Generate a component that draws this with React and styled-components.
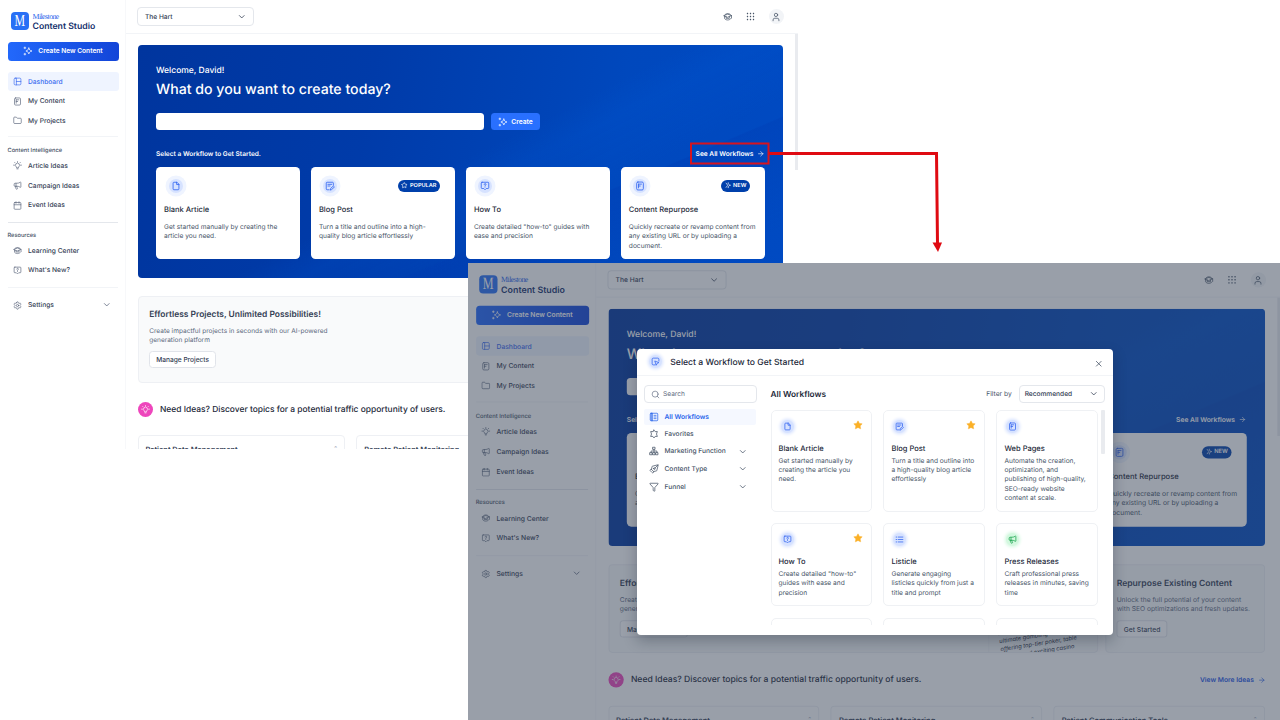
import styled, { createGlobalStyle } from "styled-components";
import {
  ArrowRight,
  Calendar,
  ChevronDown,
  Filter,
  Folder,
  Megaphone,
  Network,
  PenTool,
  Search,
  Settings,
  Star,
  User,
  X,
} from "lucide-react";

const GlobalStyle = createGlobalStyle`
  * {
    box-sizing: border-box;
  }

  body {
    margin: 0;
    background: #ffffff;
    font-family: Inter, "Liberation Sans", sans-serif;
    color: #344054;
    text-rendering: geometricPrecision;
    -webkit-font-smoothing: antialiased;
  }
`;

// Slide and the two windows on it
const Slide = styled.div`
  position: relative;
  width: 1280px;
  height: 720px;
  overflow: hidden;
  background: #ffffff;
`;

const FrontWindow = styled.div`
  position: absolute;
  left: 468px;
  top: 263px;
  width: 812px;
  height: 457px;
  overflow: hidden;
  background: #ffffff;
`;

const Scaled = styled.div`
  transform: scale(1.018);
  transform-origin: 0 0;
`;

const Backdrop = styled.div`
  position: absolute;
  inset: 0;
  background: rgba(52, 64, 84, 0.5);
`;

const ArrowOverlay = styled.svg`
  position: absolute;
  left: 0;
  top: 0;
  pointer-events: none;
`;

// Studio page
const Page = styled.div`
  display: flex;
  width: 798px;
  height: 449px;
  overflow: hidden;
  background: #ffffff;
`;

const Sidebar = styled.aside`
  width: 126px;
  flex-shrink: 0;
  padding: 11.5px 7.5px 0;
  border-right: 1px solid #f7f8fa;
`;

const Logo = styled.div`
  display: flex;
  align-items: center;
  height: 18.5px;
  padding-left: 3.5px;
  gap: 4px;
`;

const LogoMark = styled.div`
  width: 17.5px;
  height: 18px;
  border-radius: 4px;
  background: #2970f5;
  color: #ffffff;
  font: 17px/18px "Liberation Serif", serif;
  text-align: center;

  span {
    display: block;
    transform: scaleX(0.7);
    margin: 0 -3px;
  }
`;

const LogoText = styled.div`
  display: flex;
  flex-direction: column;
  padding-top: 3px;
`;

const LogoName = styled.span`
  height: 8.5px;
  font: 7.8px/8.5px "Liberation Serif", serif;
  letter-spacing: -0.55px;
  color: #2563eb;
`;

const LogoProduct = styled.span`
  font-size: 8.7px;
  line-height: 10px;
  font-weight: 600;
  color: #14306b;
  white-space: nowrap;
`;

const NewButton = styled.button`
  display: flex;
  align-items: center;
  justify-content: center;
  gap: 5px;
  width: 111px;
  height: 18.5px;
  margin: 12px 0 11.5px;
  padding: 0;
  border: none;
  border-radius: 3.5px;
  background: linear-gradient(90deg, #2268fb, #1345d8);
  color: #ffffff;
  font: 600 6.6px Inter, sans-serif;
`;

const NavItem = styled.div`
  display: flex;
  align-items: center;
  width: 111px;
  height: 19px;
  margin-bottom: 0.7px;
  padding: 0 7.5px 0 5.5px;
  gap: 6px;
  border-radius: 3px;
  font-size: 6.65px;
  font-weight: 500;
  background: ${(props) => (props.$active ? "#eff4ff" : "transparent")};
  color: ${(props) => (props.$active ? "#3b6cf0" : "#344054")};

  svg {
    color: ${(props) => (props.$active ? "#3b6cf0" : "#5b667c")};
  }

  svg:last-child:not(:first-child) {
    margin-left: auto;
  }
`;

const NavDivider = styled.div`
  height: 1px;
  margin: ${(props) => props.$margin};
  background: ${(props) => (props.$strong ? "#e4e7ec" : "#f2f4f7")};
`;

const NavLabel = styled.div`
  height: 9px;
  font-size: 5.7px;
  line-height: 9px;
  font-weight: 500;
  color: #475467;
`;

const NavGroup = styled.div`
  margin-top: 1.6px;
`;

const Content = styled.div`
  flex: 1;
  display: flex;
  flex-direction: column;
`;

const TopBar = styled.header`
  display: flex;
  align-items: center;
  height: 34px;
  flex-shrink: 0;
  padding: 0 14.5px 0 11px;
  border-bottom: 1px solid #f2f4f7;
  color: #475467;
`;

const SelectBox = styled.div`
  display: flex;
  align-items: center;
  justify-content: space-between;
  width: ${(props) => props.$width}px;
  height: ${(props) => props.$height}px;
  padding: 0 ${(props) => props.$pad}px;
  border: 1px solid #e4e7ec;
  border-radius: 4px;
  background: #ffffff;
  font-size: 6.6px;
  font-weight: 500;
  color: #344054;
`;

const TopActions = styled.div`
  display: flex;
  align-items: center;
  margin-left: auto;
  gap: 13.5px;
`;

const Avatar = styled.div`
  display: grid;
  place-items: center;
  width: 15px;
  height: 15px;
  border-radius: 50%;
  background: #f2f4f7;
`;

const Body = styled.div`
  display: flex;
  justify-content: space-between;
  flex: 1;
`;

const Main = styled.main`
  width: 645.5px;
  margin: 11px 0 0 11.5px;
`;

const ScrollThumb = styled.div`
  width: ${(props) => props.$width}px;
  height: ${(props) => props.$height}px;
  flex-shrink: 0;
  background: #e9ebef;
  border-radius: ${(props) => props.$radius || 0}px;
`;

// Hero
const Hero = styled.section`
  height: 232.5px;
  padding: 20px 18.5px 0;
  border-radius: 4px;
  color: #ffffff;
  background:
    linear-gradient(157deg, transparent 68%, rgba(0, 58, 178, 0.3) 68.3%, transparent 90%),
    linear-gradient(153deg, transparent 50%, rgba(0, 92, 220, 0.16) 56%, rgba(0, 84, 210, 0.1) 64%, transparent 68%),
    linear-gradient(100deg, #00359e 0%, #003ba9 35%, #0048bd 72%, #004ac2 100%);
`;

const Welcome = styled.div`
  height: 13px;
  font-size: 8.5px;
  line-height: 13px;
  font-weight: 500;
`;

const HeroTitle = styled.h1`
  height: 20px;
  margin: 2px 0 13px;
  font-size: 14.15px;
  line-height: 20px;
  font-weight: 500;
`;

const PromptRow = styled.div`
  display: flex;
  gap: 7.5px;
  height: 17px;
`;

const PromptInput = styled.div`
  width: 327.5px;
  border-radius: 3.5px;
  background: #ffffff;
`;

const CreateButton = styled.button`
  display: flex;
  align-items: center;
  justify-content: center;
  gap: 3.5px;
  width: 48.5px;
  padding: 0;
  border: none;
  border-radius: 3.5px;
  background: #2970ff;
  color: #ffffff;
  font: 600 6.7px Inter, sans-serif;
`;

const PickRow = styled.div`
  display: flex;
  align-items: center;
  justify-content: space-between;
  height: 12px;
  margin: 17.5px 0 7px;
  font-size: 6.55px;
  font-weight: 600;
`;

const TextLink = styled.span`
  display: flex;
  align-items: center;
  gap: 3.5px;
  font-size: 6.6px;
  font-weight: 600;
  color: ${(props) => props.$color || "inherit"};
`;

const WorkflowGrid = styled.div`
  display: grid;
  grid-template-columns: repeat(4, 1fr);
  gap: 11.3px;
`;

const WorkflowCard = styled.article`
  height: 92.5px;
  padding: 8.5px 7.5px 0 8px;
  border-radius: 4.5px;
  background: #ffffff;
`;

const CardTop = styled.div`
  display: flex;
  align-items: center;
  justify-content: space-between;
  height: 21px;
  padding-right: 7px;
`;

const IconHalo = styled.div`
  display: grid;
  place-items: center;
  width: 14px;
  height: 14px;
  margin-left: 4.5px;
  border-radius: 50%;
  background: #d6e2ff;
  box-shadow: 0 0 0 3.5px #eff4ff;
  color: #3366f0;
`;

const Badge = styled.span`
  display: flex;
  align-items: center;
  gap: 2px;
  height: 12px;
  padding: 0 3.6px;
  border-radius: 6px;
  background: #0040ab;
  color: #ffffff;
  font-size: 5.6px;
  font-weight: 600;
`;

const CardTitle = styled.div`
  height: 12px;
  margin: 7.5px 0 7.5px;
  font-size: 7.5px;
  line-height: 12px;
  font-weight: 500;
  color: #1d2939;
`;

const CardText = styled.div`
  font-size: 6.62px;
  line-height: 9.45px;
  color: #475467;
  white-space: pre-line;
`;

// Promo cards
const PromoRow = styled.div`
  display: flex;
  justify-content: space-between;
  margin-top: 18.5px;
`;

const PromoCard = styled.section`
  display: flex;
  justify-content: space-between;
  width: ${(props) => props.$width}px;
  height: 87px;
  overflow: hidden;
  border: 1px solid #eef0f4;
  border-radius: 4px;
  background: #f9fafb;
`;

const PromoCopy = styled.div`
  padding: 11.5px 0 0 10.7px;
`;

const PromoTitle = styled.div`
  height: 13px;
  font-size: 8.45px;
  line-height: 13px;
  font-weight: 600;
  color: #344054;
  white-space: nowrap;
`;

const PromoText = styled.div`
  margin: 5.5px 0 5px;
  font-size: 6.55px;
  line-height: 9.4px;
  color: #5d6a80;
  white-space: pre;
`;

const OutlineButton = styled.button`
  display: block;
  height: 17.5px;
  padding: 0 6px;
  border: 1px solid #e1e4ea;
  border-radius: 3.5px;
  background: #ffffff;
  font: 500 6.6px Inter, sans-serif;
  color: #344054;
`;

const Paper = styled.div`
  width: 107px;
  height: 60px;
  flex-shrink: 0;
  margin-top: 45px;
  padding: 10.5px 0 0 9.5px;
  border-left: 1px solid #eceef2;
  border-radius: 3px;

  p {
    margin: 0;
    font: italic 5.7px/8px Inter, sans-serif;
    color: #1d2939;
    transform: rotate(-9deg);
    white-space: pre;
  }
`;

// Ideas
const IdeasHead = styled.div`
  display: flex;
  align-items: center;
  height: 16px;
  margin-top: 18.5px;
  gap: 7.5px;
`;

const IdeasBadge = styled.div`
  display: grid;
  place-items: center;
  width: 15px;
  height: 15px;
  border-radius: 50%;
  background: #ee46bc;
  color: #ffffff;
`;

const IdeasTitle = styled.div`
  flex: 1;
  padding-top: 0.5px;
  font-size: 8.43px;
  font-weight: 500;
  color: #1d2939;
`;

const IdeasGrid = styled.div`
  display: grid;
  grid-template-columns: repeat(3, 1fr);
  gap: 11px;
  margin-top: 17.5px;
`;

const IdeaCard = styled.div`
  display: flex;
  justify-content: space-between;
  height: 40px;
  padding: 7.5px 7px 0 7px;
  border: 1px solid #eef0f4;
  border-radius: 4px;
  font-size: 7.4px;
  line-height: 12px;
  font-weight: 600;
  color: #344054;

  span {
    color: #98a2b3;
  }
`;

// Workflow picker dialog
const Dialog = styled.div`
  position: absolute;
  left: 168.5px;
  top: 85.5px;
  display: flex;
  flex-direction: column;
  width: 476px;
  height: 286px;
  border-radius: 4px;
  overflow: hidden;
  background: #ffffff;
  box-shadow: 0 6px 14px rgba(16, 24, 40, 0.28);
`;

const DialogHead = styled.div`
  display: flex;
  align-items: center;
  height: 27.5px;
  flex-shrink: 0;
  padding: 0 9px 0 12.5px;
  border-bottom: 1px solid #f2f4f7;
  color: #475467;

  > svg {
    margin-left: auto;
    margin-top: 4px;
  }
`;

const DialogTitle = styled.div`
  margin-left: 8.3px;
  padding-top: 2px;
  font-size: 8.6px;
  font-weight: 500;
  color: #1d2939;
`;

const Glow = styled.div`
  display: grid;
  place-items: center;
  width: 13px;
  height: 13px;
  border-radius: 50%;
  background: ${(props) => (props.$green ? "#d3f8df" : "#d6e2ff")};
  box-shadow: 0 0 3px 1.5px ${(props) => (props.$green ? "#dcfae6" : "#dfe8ff")};
  color: ${(props) => (props.$green ? "#16a34a" : "#2f62f0")};
`;

const DialogBody = styled.div`
  display: flex;
  flex: 1;
  padding: 9px 8.5px 9.5px 7.5px;
  gap: 13.5px;
  min-height: 0;
`;

const FilterColumn = styled.div`
  width: 113px;
  flex-shrink: 0;
`;

const SearchBox = styled.div`
  display: flex;
  align-items: center;
  gap: 3.5px;
  height: 18px;
  margin-bottom: 5.5px;
  padding: 0 5.5px;
  border: 1px solid #e4e7ec;
  border-radius: 4px;
  font-size: 6.6px;
  color: #667085;
`;

const FilterItem = styled.div`
  display: flex;
  align-items: center;
  gap: 5.5px;
  width: 112px;
  height: 16.5px;
  margin-bottom: ${(props) => props.$space}px;
  padding: 0 8.5px 0 5px;
  border-radius: 2px;
  font-size: 6.65px;
  font-weight: ${(props) => (props.$active ? 600 : 500)};
  background: ${(props) => (props.$active ? "#f5f8ff" : "transparent")};
  color: ${(props) => (props.$active ? "#2563eb" : "#475467")};

  svg:last-child:not(:first-child) {
    margin-left: auto;
  }
`;

const Results = styled.div`
  display: flex;
  flex-direction: column;
  flex: 1;
`;

const ResultsHead = styled.div`
  display: flex;
  align-items: center;
  height: 18px;
  flex-shrink: 0;
  margin-bottom: 7px;
  padding-right: 0.5px;
`;

const ResultsTitle = styled.div`
  flex: 1;
  padding-top: 1px;
  font-size: 8.3px;
  font-weight: 600;
  color: #1d2939;
`;

const FilterLabel = styled.span`
  margin-right: 7px;
  font-size: 6.7px;
  color: #475467;
`;

const ResultsScroll = styled.div`
  display: flex;
  flex: 1;
  min-height: 0;
  overflow: hidden;
  gap: 3px;
`;

const ResultsGrid = styled.div`
  display: grid;
  grid-template-columns: repeat(3, 101.7px);
  grid-template-rows: 102px 83px 83px;
  gap: 11.3px;
`;

const ResultCard = styled.div`
  padding: 8.5px 7px;
  border: 1.5px solid #eff1f4;
  border-radius: 5px;
  white-space: pre;
`;

const ResultTop = styled.div`
  display: flex;
  justify-content: space-between;
  padding: 0.5px 1px 0 2px;
`;

const ResultTitle = styled.div`
  height: 11px;
  margin: 9.5px 0 3px;
  font-size: 7.5px;
  line-height: 11px;
  font-weight: 500;
  color: #1d2939;
`;

const glyphs = {
  dashboard: (
    <>
      <rect x="3" y="3" width="18" height="18" rx="3" />
      <path d="M9 3v18M9 12h12" />
    </>
  ),
  note: (
    <>
      <rect x="4" y="2.5" width="16" height="19" rx="3" />
      <path d="M8.5 7.5h7M8.5 12h4M8.5 7.5v9" />
    </>
  ),
  bulb: (
    <>
      <path d="M9.5 17.5v-1.3a5.5 5.5 0 1 1 5 0v1.3zM10.5 21h3" />
      <path d="M12 1.5v1.7M1.5 11h2M20.5 11h2M4.5 3.8l1.3 1.3M19.5 3.8l-1.3 1.3" />
    </>
  ),
  learning: (
    <>
      <path d="M2.5 9 12 5.5 21.5 9 12 13zM21.5 9v6" />
      <path d="M4 10.5v6c3 5 13 5 16 0M8 12v4h8v-4" />
      <path d="M4.5 7.5C7 2.5 17 2.5 19.5 7.5" />
    </>
  ),
  question: (
    <>
      <path d="M5 3h14a2 2 0 0 1 2 2v11a2 2 0 0 1-2 2h-4l-3 3-3-3H5a2 2 0 0 1-2-2V5a2 2 0 0 1 2-2z" />
      <path d="M10 8.3a2.2 2.2 0 1 1 2.8 2.2l-.8.5v.8M12 14.5v.2" />
    </>
  ),
  sparkle: (
    <>
      <path d="M14 5c1 4 2.5 5.7 7.5 7-5 1.3-6.5 3-7.5 7-1-4-2.5-5.7-7-7 4.5-1.3 6-3 7-7z" />
      <path d="M4.5 2.5v4M2.5 4.5h4M4.5 17.5v4M2.5 19.5h4" />
    </>
  ),
  file: (
    <>
      <path d="M13.5 3H7a2 2 0 0 0-2 2v14a2 2 0 0 0 2 2h10a2 2 0 0 0 2-2V8.5z" />
      <path d="M13.5 3v5.5H19" />
    </>
  ),
  edit: (
    <>
      <path d="M20 10V5a2 2 0 0 0-2-2H5a2 2 0 0 0-2 2v14a2 2 0 0 0 2 2h5" />
      <path d="M7 8h9M7 12h5M13 21l.8-3.5L20 12l2.5 2.5-6.3 5.7z" />
    </>
  ),
  cursor: (
    <>
      <path d="M21 11V6a3 3 0 0 0-3-3H6a3 3 0 0 0-3 3v12a3 3 0 0 0 3 3h5" />
      <path d="M11 11l10 4-4.5 1.8L14.5 21z" />
    </>
  ),
  list: <path d="M9 5.5h12M9 12h12M9 18.5h12M3 5.5h2M3 12h2M3 18.5h2" />,
  board: (
    <>
      <rect x="3" y="3" width="18" height="18" rx="2" />
      <path d="M8 3v18M12 8h5M12 12h5M12 16h5M5.5 3v18" />
    </>
  ),
  hexStar: (
    <path d="M12 2.5l2.8 3.8 5.2-.2-2 5.9 2 5.9-5.2-.2L12 21.5l-2.8-3.8-5.2.2 2-5.9-2-5.9 5.2.2z" />
  ),
  tree: (
    <>
      <path d="M9.5 3h5v5h-5zM2.500 16h5v5h-5zM9.500 16h5v5h-5zM16.500 16h5v5h-5z" />
      <path d="M12 8v8M5 16v-4h14v4" />
    </>
  ),
  burst: (
    <>
      <path d="M12 6c.8 3 2.5 5 8.5 6-6 1-7.7 3-8.5 6" />
      <path d="M4 4l6 8-6 8M12 3v1M12 20v1" />
    </>
  ),
};

function Glyph({ name, size = 9, stroke = 1.8 }) {
  return (
    <svg
      width={size}
      height={size}
      viewBox="0 0 24 24"
      fill="none"
      stroke="currentColor"
      strokeWidth={stroke}
      strokeLinecap="round"
      strokeLinejoin="round"
    >
      {glyphs[name]}
    </svg>
  );
}

function DotGrid() {
  const steps = [4, 12, 20];
  return (
    <svg width="9" height="9" viewBox="0 0 24 24" fill="currentColor">
      {steps.map((y) =>
        steps.map((x) => (
          <rect key={`${x}-${y}`} x={x - 1.8} y={y - 1.8} width="3.6" height="3.6" rx="1" />
        ))
      )}
    </svg>
  );
}

const workflows = [
  {
    title: "Blank Article",
    icon: "file",
    text: "Get started manually by creating the\narticle you need.",
  },
  {
    title: "Blog Post",
    icon: "edit",
    text: "Turn a title and outline into a high-\nquality blog article effortlessly",
    badge: "POPULAR",
  },
  {
    title: "How To",
    icon: "question",
    text: 'Create detailed "how-to" guides with\nease and precision',
  },
  {
    title: "Content Repurpose",
    icon: "note",
    text: "Quickly recreate or revamp content from\nany existing URL or by uploading a\ndocument.",
    badge: "NEW",
  },
];

const results = [
  {
    title: "Blank Article",
    icon: "file",
    star: true,
    text: "Get started manually by\ncreating the article you\nneed.",
  },
  {
    title: "Blog Post",
    icon: "edit",
    star: true,
    text: "Turn a title and outline into\na high-quality blog article\neffortlessly",
  },
  {
    title: "Web Pages",
    icon: "note",
    text: "Automate the creation,\noptimization, and\npublishing of high-quality,\nSEO-ready website\ncontent at scale.",
  },
  {
    title: "How To",
    icon: "question",
    star: true,
    text: 'Create detailed "how-to"\nguides with ease and\nprecision',
  },
  {
    title: "Listicle",
    icon: "list",
    text: "Generate engaging\nlisticles quickly from just a\ntitle and prompt",
  },
  {
    title: "Press Releases",
    green: true,
    text: "Craft professional press\nreleases in minutes, saving\ntime",
  },
];

const ideas = [
  "Patient Data Management",
  "Remote Patient Monitoring",
  "Patient Communication Tools",
];

function StudioSidebar() {
  return (
    <Sidebar>
      <Logo>
        <LogoMark>
          <span>M</span>
        </LogoMark>
        <LogoText>
          <LogoName>Milestone</LogoName>
          <LogoProduct>Content Studio</LogoProduct>
        </LogoText>
      </Logo>
      <NewButton>
        <Glyph name="sparkle" size={10} />
        Create New Content
      </NewButton>
      <NavItem $active>
        <Glyph name="dashboard" />
        Dashboard
      </NavItem>
      <NavItem>
        <Glyph name="note" />
        My Content
      </NavItem>
      <NavItem>
        <Folder size={9} strokeWidth={1.8} />
        My Projects
      </NavItem>
      <NavDivider $margin="6px 0 8.5px" />
      <NavLabel>Content Intelligence</NavLabel>
      <NavGroup>
        <NavItem>
          <Glyph name="bulb" />
          Article Ideas
        </NavItem>
        <NavItem>
          <Megaphone size={9} strokeWidth={1.8} />
          Campaign Ideas
        </NavItem>
        <NavItem>
          <Calendar size={9} strokeWidth={1.8} />
          Event Ideas
        </NavItem>
      </NavGroup>
      <NavDivider $strong $margin="6.7px 0 8px" />
      <NavLabel>Resources</NavLabel>
      <NavGroup>
        <NavItem>
          <Glyph name="learning" />
          Learning Center
        </NavItem>
        <NavItem>
          <Glyph name="question" />
          What's New?
        </NavItem>
      </NavGroup>
      <NavDivider $margin="7px 0 7.8px" />
      <NavItem>
        <Settings size={9} strokeWidth={1.8} />
        Settings
        <ChevronDown size={9.5} strokeWidth={2} />
      </NavItem>
    </Sidebar>
  );
}

function StudioPage() {
  return (
    <Page>
      <StudioSidebar />
      <Content>
        <TopBar>
          <SelectBox $width={117} $height={19} $pad={7}>
            The Hart
            <ChevronDown size={9.5} />
          </SelectBox>
          <TopActions>
            <Glyph name="learning" size={9.5} />
            <DotGrid />
            <Avatar>
              <User size={10} strokeWidth={1.8} />
            </Avatar>
          </TopActions>
        </TopBar>
        <Body>
          <Main>
            <Hero>
              <Welcome>Welcome, David!</Welcome>
              <HeroTitle>What do you want to create today?</HeroTitle>
              <PromptRow>
                <PromptInput />
                <CreateButton>
                  <Glyph name="sparkle" size={10} />
                  Create
                </CreateButton>
              </PromptRow>
              <PickRow>
                Select a Workflow to Get Started.
                <TextLink>
                  See All Workflows
                  <ArrowRight size={7.5} />
                </TextLink>
              </PickRow>
              <WorkflowGrid>
                {workflows.map((item) => (
                  <WorkflowCard key={item.title}>
                    <CardTop>
                      <IconHalo>
                        <Glyph name={item.icon} size={10} stroke={2} />
                      </IconHalo>
                      {item.badge && (
                        <Badge>
                          {item.badge === "NEW" ? (
                            <Glyph name="burst" size={6.5} stroke={2.4} />
                          ) : (
                            <Star size={6.5} strokeWidth={2.4} />
                          )}
                          {item.badge}
                        </Badge>
                      )}
                    </CardTop>
                    <CardTitle>{item.title}</CardTitle>
                    <CardText>{item.text}</CardText>
                  </WorkflowCard>
                ))}
              </WorkflowGrid>
            </Hero>

            <PromoRow>
              <PromoCard $width={481.5}>
                <PromoCopy>
                  <PromoTitle>Effortless Projects, Unlimited Possibilities!</PromoTitle>
                  <PromoText>
                    {"Create impactful projects in seconds with our AI-powered\ngeneration platform"}
                  </PromoText>
                  <OutlineButton>Manage Projects</OutlineButton>
                </PromoCopy>
                <Paper>
                  <p>{"Hollywood Casino offers\nultimate gambling destin, table\noffering top-tier poker, table\ngames and exciting casino"}</p>
                </Paper>
              </PromoCard>
              <PromoCard $width={157.5}>
                <PromoCopy>
                  <PromoTitle>Repurpose Existing Content</PromoTitle>
                  <PromoText>
                    {"Unlock the full potential of your content\nwith SEO optimizations and fresh updates."}
                  </PromoText>
                  <OutlineButton>Get Started</OutlineButton>
                </PromoCopy>
              </PromoCard>
            </PromoRow>

            <IdeasHead>
              <IdeasBadge>
                <Glyph name="bulb" size={9} />
              </IdeasBadge>
              <IdeasTitle>
                Need Ideas? Discover topics for a potential traffic opportunity of users.
              </IdeasTitle>
              <TextLink $color="#1d55e5">
                View More Ideas
                <ArrowRight size={7.5} />
              </TextLink>
            </IdeasHead>
            <IdeasGrid>
              {ideas.map((idea) => (
                <IdeaCard key={idea}>
                  {idea}
                  <span>ˆ</span>
                </IdeaCard>
              ))}
            </IdeasGrid>
          </Main>
          <ScrollThumb $width={3} $height={136} />
        </Body>
      </Content>
    </Page>
  );
}

function WorkflowDialog() {
  return (
    <Dialog>
      <DialogHead>
        <Glow>
          <Glyph name="cursor" size={9} stroke={2} />
        </Glow>
        <DialogTitle>Select a Workflow to Get Started</DialogTitle>
        <X size={9.5} strokeWidth={2} />
      </DialogHead>
      <DialogBody>
        <FilterColumn>
          <SearchBox>
            <Search size={9} strokeWidth={1.8} />
            Search
          </SearchBox>
          <FilterItem $active $space={0.5}>
            <Glyph name="board" size={10} />
            All Workflows
          </FilterItem>
          <FilterItem $space={1}>
            <Glyph name="hexStar" size={10} />
            Favorites
          </FilterItem>
          <FilterItem $space={1.3}>
            <Glyph name="tree" size={10} />
            Marketing Function
            <ChevronDown size={9.5} />
          </FilterItem>
          <FilterItem $space={1.3}>
            <PenTool size={10} strokeWidth={1.8} transform="scale(-1 1)" />
            Content Type
            <ChevronDown size={9.5} />
          </FilterItem>
          <FilterItem $space={0}>
            <Filter size={10} strokeWidth={1.8} />
            Funnel
            <ChevronDown size={9.5} />
          </FilterItem>
        </FilterColumn>
        <Results>
          <ResultsHead>
            <ResultsTitle>All Workflows</ResultsTitle>
            <FilterLabel>Filter by</FilterLabel>
            <SelectBox $width={86} $height={18} $pad={5}>
              Recommended
              <ChevronDown size={9.5} />
            </SelectBox>
          </ResultsHead>
          <ResultsScroll>
            <ResultsGrid>
              {results.map((item) => (
                <ResultCard key={item.title}>
                  <ResultTop>
                    <Glow $green={item.green}>
                      {item.green ? (
                        <Megaphone size={9} />
                      ) : (
                        <Glyph name={item.icon} size={9} stroke={2} />
                      )}
                    </Glow>
                    {item.star && <Star size={10} color="#fbb026" fill="#fbb026" strokeWidth={1} />}
                  </ResultTop>
                  <ResultTitle>{item.title}</ResultTitle>
                  <CardText>{item.text}</CardText>
                </ResultCard>
              ))}
              <ResultCard />
              <ResultCard />
              <ResultCard />
            </ResultsGrid>
            <ScrollThumb $width={4} $height={44} $radius={1} />
          </ResultsScroll>
        </Results>
      </DialogBody>
    </Dialog>
  );
}

function App() {
  return (
    <>
      <GlobalStyle />
      <Slide>
        <StudioPage />
        <FrontWindow>
          <Scaled>
            <StudioPage />
          </Scaled>
          <Backdrop />
          <WorkflowDialog />
        </FrontWindow>
        {/* Callout frame and connector */}
        <ArrowOverlay width="1280" height="270" viewBox="0 0 1280 270">
          <rect x="691" y="143.5" width="77.5" height="20" fill="none" stroke="#d7141f" strokeWidth="2" />
          <path d="M769 153.5H936.5L937.5 244" fill="none" stroke="#df0a12" strokeWidth="3" />
          <path d="M932.5 242.5H942L938 252z" fill="#df0a12" />
        </ArrowOverlay>
      </Slide>
    </>
  );
}

export default App;
